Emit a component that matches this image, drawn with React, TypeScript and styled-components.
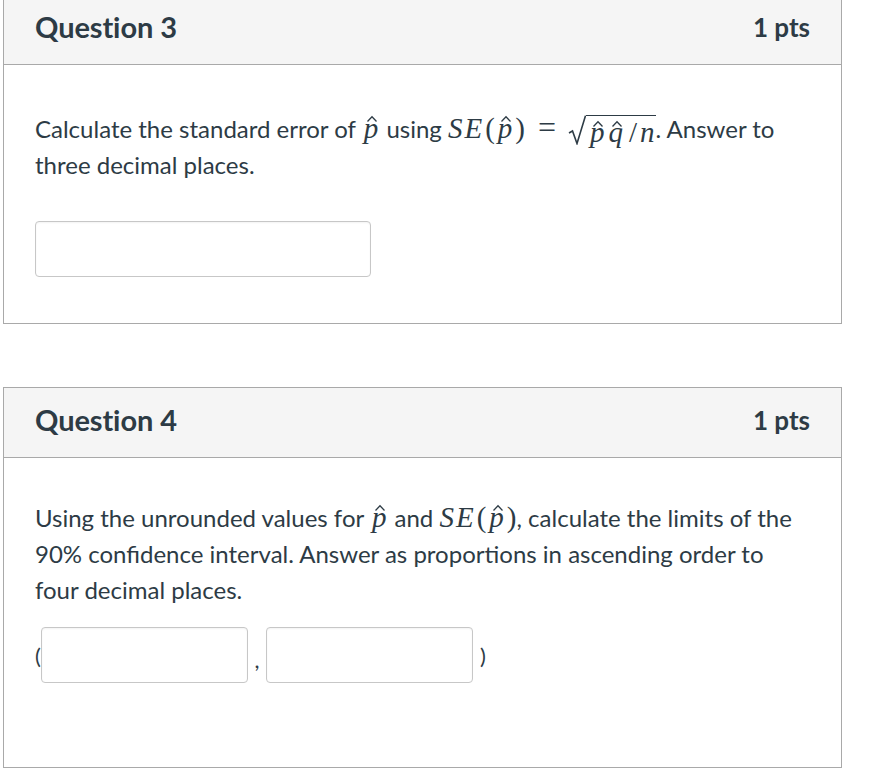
import React from "react";
import styled, { createGlobalStyle } from "styled-components";

const Global = createGlobalStyle`
  html, body { margin: 0; padding: 0; background: #ffffff; }
  body { font-family: Lato, "Open Sans", Arial, sans-serif; color: #2d3b45; }
`;

const Page = styled.div`
  display: flex;
  flex-direction: column;
  gap: 63px;
  width: 839px;
  margin: -6px 0 0 3px;
`;

const Card = styled.section`
  border: 1px solid #a9a9a9;
  background: #fff;
`;

const Header = styled.header`
  display: flex;
  align-items: center;
  justify-content: space-between;
  box-sizing: border-box;
  height: 70px;
  padding: 0 31px 6px 31px;
  background: #f5f5f5;
  border-bottom: 1px solid #a9a9a9;
`;

const Title = styled.h2`
  margin: 0;
  font-size: 29px;
  font-weight: 700;
  letter-spacing: -0.1px;
  color: #2d3b45;
`;

const Points = styled.div`
  font-size: 26px;
  font-weight: 700;
  color: #2d3b45;
`;

const Body = styled.div<{ $top: number; $bottom: number }>`
  padding: ${(p) => p.$top}px 29px ${(p) => p.$bottom}px 31px;
`;

const Text = styled.p<{ $after: number }>`
  margin: 0 0 ${(p) => p.$after}px 0;
  font-size: 24px;
  line-height: 36px;
  color: #2d3b45;
`;

const Math = styled.span`
  font-family: "Liberation Serif", "DejaVu Serif", serif;
  font-style: italic;
  font-size: 29px;
  line-height: 1;
  white-space: nowrap;
`;

const Sym = styled.span<{ $l?: number; $r?: number; $italic?: boolean; $size?: number; $ls?: number }>`
  font-style: ${(p) => (p.$italic ? "italic" : "normal")};
  font-size: ${(p) => (p.$size ? `${p.$size}px` : "inherit")};
  letter-spacing: ${(p) => p.$ls ?? 0}px;
  padding: 0 ${(p) => p.$r ?? 0}px 0 ${(p) => p.$l ?? 0}px;
`;

const HatBox = styled.span`
  position: relative;
  display: inline-block;
  padding: 0 2px 0 2px;
`;

const HatMark = styled.svg`
  position: absolute;
  left: 50%;
  top: 2px;
  width: 10px;
  height: 6px;
  transform: translateX(-40%);
  overflow: visible;
`;

const Hat = ({ c }: { c: string }) => (
  <HatBox>
    {c}
    <HatMark viewBox="0 0 10 6">
      <path d="M0.5 5.5 L5 0.8 L9.5 5.5" fill="none" stroke="#2d3b45" strokeWidth="1.3" />
    </HatMark>
  </HatBox>
);

const Sqrt = styled.span`
  display: inline-flex;
  align-items: stretch;
  vertical-align: -7px;
  margin-left: 2px;
`;

const Radicand = styled.span`
  display: inline-block;
  border-top: 1.4px solid #2d3b45;
  padding: 3px 1px 0 2px;
  line-height: 26px;
`;

const RadicalSign = () => (
  <svg width="18" height="30" viewBox="0 0 18 30" style={{ display: "block" }}>
    <path
      d="M1 18 L4.5 16 L9 28.5 L17.5 0.7"
      fill="none"
      stroke="#2d3b45"
      strokeWidth="1.6"
      strokeLinejoin="miter"
    />
  </svg>
);

const Field = styled.input<{ $w: number }>`
  box-sizing: border-box;
  width: ${(p) => p.$w}px;
  height: 56px;
  border: 1px solid #c7c7c7;
  border-radius: 4px;
  background: #fff;
  box-shadow: inset 0 1px 2px rgba(0, 0, 0, 0.05);
  padding: 0 10px;
  font-size: 20px;
  font-family: Lato, sans-serif;
  outline: none;
`;

const FieldRow = styled.div<{ $after: number }>`
  display: flex;
  align-items: center;
  margin: 0 0 ${(p) => p.$after}px 0;
  font-size: 22px;
  color: #2d3b45;
`;

const Paren = styled.span<{ $l: number; $r: number }>`
  display: inline-block;
  padding: 0 ${(p) => p.$r}px 0 ${(p) => p.$l}px;
`;

const Comma = styled.span`
  display: inline-block;
  width: 18px;
  text-align: center;
  margin-top: 8px;
`;

const SE = () => (
  <>
    <Sym $italic $ls={2}>SE</Sym>
    <Sym $l={1} $r={1}>(</Sym>
    <Hat c="p" />
    <Sym $l={1}>)</Sym>
  </>
);

export default function App() {
  return (
    <>
      <Global />
      <Page>
        <Card>
          <Header>
            <Title>Question 3</Title>
            <Points>1 pts</Points>
          </Header>
          <Body $top={46} $bottom={46}>
            <Text $after={38}>
              Calculate the standard error of{" "}
              <Math>
                <Hat c="p" />
              </Math>{" "}
              using{" "}
              <Math>
                <SE />
                <Sym $l={13} $r={10} $size={32}>=</Sym>
                <Sqrt>
                  <RadicalSign />
                  <Radicand>
                    <Hat c="p" />
                    <Hat c="q" />
                    <Sym $l={4} $r={3}>/</Sym>n
                  </Radicand>
                </Sqrt>
              </Math>
              . Answer to three decimal places.
            </Text>
            <FieldRow $after={0}>
              <Field $w={336} aria-label="Answer" />
            </FieldRow>
          </Body>
        </Card>
        <Card>
          <Header>
            <Title>Question 4</Title>
            <Points>1 pts</Points>
          </Header>
          <Body $top={42} $bottom={47}>
            <Text $after={19}>
              Using the unrounded values for{" "}
              <Math>
                <Hat c="p" />
              </Math>{" "}
              and{" "}
              <Math>
                <SE />
              </Math>
              , calculate the limits of the 90% confidence interval. Answer as
              proportions in ascending order to four decimal places.
            </Text>
            <FieldRow $after={37}>
              <Paren $l={0} $r={0}>(</Paren>
              <Field $w={207} aria-label="Lower limit" />
              <Comma>,</Comma>
              <Field $w={207} aria-label="Upper limit" />
              <Paren $l={7} $r={0}>)</Paren>
            </FieldRow>
          </Body>
        </Card>
      </Page>
    </>
  );
}
